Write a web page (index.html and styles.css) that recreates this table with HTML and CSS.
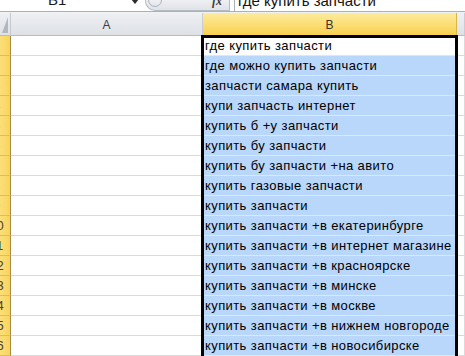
FILE: index.html
```html
<!DOCTYPE html>
<html lang="ru">
<head>
<meta charset="utf-8">
<title>Excel</title>
<link rel="stylesheet" href="styles.css">
</head>
<body>
<div class="app">
  <div class="fbar">
    <div class="namebox"><span class="nb-text">B1</span></div>
    <div class="nb-arrow"></div>
    <div class="fx-group">
      <span class="circle"></span>
      <span class="fx">fx</span>
    </div>
    <div class="finput"><span class="f-text">где купить запчасти</span></div>
  </div>
  <div class="gap"></div>
  <div class="sheet">
    <div class="grid">
      <div class="corner"><span class="tri"></span></div>
      <div class="ch">A</div>
      <div class="ch sel">B</div>
      <div class="ch"></div>

      <div class="rh"><span>1</span></div><div class="ca"></div><div class="cb active">где купить запчасти</div><div class="cc"></div>
      <div class="rh"><span>2</span></div><div class="ca"></div><div class="cb">где можно купить запчасти</div><div class="cc"></div>
      <div class="rh"><span>3</span></div><div class="ca"></div><div class="cb">запчасти самара купить</div><div class="cc"></div>
      <div class="rh"><span>4</span></div><div class="ca"></div><div class="cb">купи запчасть интернет</div><div class="cc"></div>
      <div class="rh"><span>5</span></div><div class="ca"></div><div class="cb">купить б +у запчасти</div><div class="cc"></div>
      <div class="rh"><span>6</span></div><div class="ca"></div><div class="cb">купить бу запчасти</div><div class="cc"></div>
      <div class="rh"><span>7</span></div><div class="ca"></div><div class="cb">купить бу запчасти +на авито</div><div class="cc"></div>
      <div class="rh"><span>8</span></div><div class="ca"></div><div class="cb">купить газовые запчасти</div><div class="cc"></div>
      <div class="rh"><span>9</span></div><div class="ca"></div><div class="cb">купить запчасти</div><div class="cc"></div>
      <div class="rh"><span>10</span></div><div class="ca"></div><div class="cb">купить запчасти +в екатеринбурге</div><div class="cc"></div>
      <div class="rh"><span>11</span></div><div class="ca"></div><div class="cb">купить запчасти +в интернет магазине</div><div class="cc"></div>
      <div class="rh"><span>12</span></div><div class="ca"></div><div class="cb">купить запчасти +в красноярске</div><div class="cc"></div>
      <div class="rh"><span>13</span></div><div class="ca"></div><div class="cb">купить запчасти +в минске</div><div class="cc"></div>
      <div class="rh"><span>14</span></div><div class="ca"></div><div class="cb">купить запчасти +в москве</div><div class="cc"></div>
      <div class="rh"><span>15</span></div><div class="ca"></div><div class="cb">купить запчасти +в нижнем новгороде</div><div class="cc"></div>
      <div class="rh"><span>16</span></div><div class="ca"></div><div class="cb">купить запчасти +в новосибирске</div><div class="cc"></div>
    </div>
    <div class="selection"></div>
  </div>
</div>
</body>
</html>
```

FILE: styles.css
```css
html, body {
  margin: 0;
  padding: 0;
  background: #ffffff;
  overflow: hidden;
}

.app {
  width: 465px;
  height: 356px;
  display: flex;
  flex-direction: column;
  font-family: "Liberation Sans", Arial, sans-serif;
  overflow: hidden;
}

/* formula bar */
.fbar {
  height: 11px;
  border-bottom: 1px solid #a9b0b8;
  display: flex;
  align-items: flex-end;
  overflow: hidden;
  background: #ffffff;
  flex-shrink: 0;
}

.namebox {
  width: 130px;
  height: 11px;
  display: flex;
  align-items: flex-end;
  justify-content: flex-start;
  padding-left: 48px;
  box-sizing: border-box;
  flex-shrink: 0;
}

.nb-text {
  font-size: 15px;
  line-height: 15px;
  color: #1a1a1a;
  margin-bottom: 4px;
}

.nb-arrow {
  width: 0;
  height: 0;
  border-left: 4px solid transparent;
  border-right: 4px solid transparent;
  border-top: 5px solid #2b2b2b;
  margin: 0 0 7px 1px;
  align-self: flex-end;
  flex-shrink: 0;
}

.fx-group {
  margin-left: 6px;
  width: 85px;
  height: 11px;
  box-sizing: border-box;
  border: 1px solid #b6bcc4;
  border-top: none;
  border-bottom-left-radius: 10px;
  background: linear-gradient(#eef0f3, #dfe2e7);
  display: flex;
  align-items: flex-end;
  position: relative;
  flex-shrink: 0;
}

.circle {
  width: 12px;
  height: 12px;
  border-radius: 50%;
  border: 1px solid #aab1ba;
  background: linear-gradient(#fbfbfc, #e3e6ea);
  margin: 0 0 3px 2px;
  flex-shrink: 0;
}

.fx {
  margin-left: auto;
  margin-right: 7px;
  margin-bottom: 3px;
  font-family: "Liberation Serif", serif;
  font-style: italic;
  font-weight: bold;
  font-size: 12px;
  line-height: 12px;
  color: #3b3b3b;
}

.finput {
  flex: 1;
  height: 11px;
  margin-left: 4px;
  border-left: 1px solid #a9b0b8;
  display: flex;
  align-items: flex-end;
  padding-left: 3px;
  overflow: hidden;
}

.f-text {
  font-size: 15px;
  line-height: 15px;
  color: #111111;
  margin-bottom: 3px;
  white-space: nowrap;
}

.gap {
  height: 1px;
  background: #f1f2f4;
  flex-shrink: 0;
}

/* sheet */
.sheet {
  position: relative;
  flex: 1;
  overflow: hidden;
}

.grid {
  display: grid;
  grid-template-columns: 11px 192px 254px 1fr;
  grid-template-rows: 23px repeat(16, 20px);
}

.grid > div {
  box-sizing: border-box;
}

.corner {
  background: linear-gradient(#eef0f3, #dee1e6);
  border-right: 1px solid #c4c9d0;
  border-bottom: 1px solid #b7bdc5;
  position: relative;
}

.tri {
  position: absolute;
  right: 2px;
  bottom: 2px;
  width: 0;
  height: 0;
  border-left: 6px solid transparent;
  border-bottom: 16px solid #b3b8bf;
}

.ch {
  background: linear-gradient(#eef0f3, #dee1e6);
  border-right: 1px solid #c9cdd3;
  border-bottom: 1px solid #b7bdc5;
  display: flex;
  align-items: flex-end;
  justify-content: center;
  padding-bottom: 4px;
  font-size: 12px;
  line-height: 12px;
  color: #3c3c3c;
}

.ch.sel {
  background: linear-gradient(#fdeb9e, #fbdd72 55%, #f7d050);
  border-right: 1px solid #d9b64c;
  border-bottom: 1px solid #c9a43c;
  color: #3a3527;
}

.rh {
  background: linear-gradient(to right, #fcdf7a, #f9d45c);
  border-right: 1px solid #a48b47;
  border-bottom: 1px solid #e0bd55;
  display: flex;
  justify-content: flex-end;
  align-items: flex-end;
  overflow: hidden;
}

.rh span {
  flex-shrink: 0;
  width: 27px;
  text-align: center;
  font-size: 13px;
  line-height: 13px;
  padding-bottom: 3px;
  color: #4a4130;
}

.ca, .cc {
  background: #ffffff;
  border-right: 1px solid #dadada;
  border-bottom: 1px solid #dadada;
}

.cb {
  background: #b9d7fb;
  border-right: 1px solid #b9d7fb;
  border-bottom: 1px solid #d9e8fa;
  font-size: 13px;
  line-height: 15px;
  letter-spacing: 0.4px;
  color: #000000;
  padding: 0 0 2px 2px;
  display: flex;
  align-items: flex-end;
  white-space: nowrap;
  overflow: hidden;
}

.cb.active {
  background: #ffffff;
}

.selection {
  position: absolute;
  left: 201px;
  top: 22px;
  width: 257px;
  height: 400px;
  box-sizing: border-box;
  border: 3px solid #000000;
  pointer-events: none;
}
```
